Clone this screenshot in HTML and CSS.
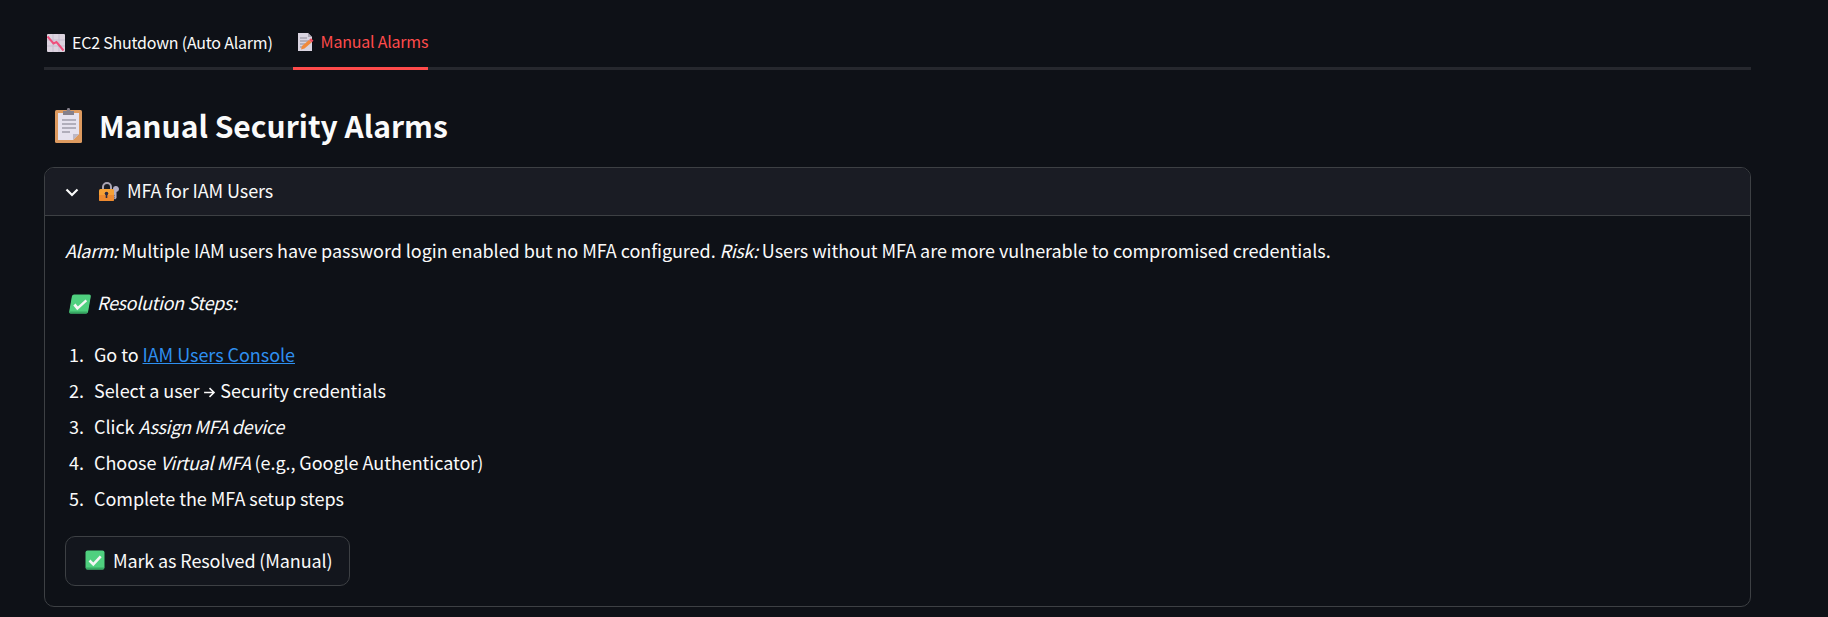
FILE: index.html
```html
<!DOCTYPE html>
<html>
<head>
    <title>Manual Alarms</title>
    <link rel="stylesheet" href="styles.css">
</head>
<body>
    <svg class="defs" width="0" height="0">
        <symbol id="check" viewBox="0 0 20 20">
            <rect x="0.5" y="0.5" width="19" height="19" rx="2" fill="#4fd07f"/>
            <path d="M1 17.500v1a1 1 0 0 0 1 1h16a1 1 0 0 0 1-1v-1z" fill="#36a862"/>
            <path d="M4.500 10.500l3.800 3.800 7.400-8" fill="none" stroke="#f4f6f4" stroke-width="2.600"/>
        </symbol>
    </svg>
    <main class="page">
        <div class="tabs">
            <button class="tab" type="button">
                <svg class="tab-icon" viewBox="0 0 18 18">
                    <rect width="18" height="18" rx="1" fill="#dcd3df"/>
                    <path d="M0 6h18M0 12h18M6 0v18M12 0v18" stroke="#c6bdcf" stroke-width="1"/>
                    <path d="M0.500 2.500l6 7 3-1.500 7 8.500" fill="none" stroke="#ef4f7c" stroke-width="2"/>
                </svg>
                EC2 Shutdown (Auto Alarm)
            </button>
            <button class="tab active" type="button">
                <svg class="tab-icon memo" viewBox="0 0 16 18">
                    <path d="M0 0h10l4 4v14H0z" fill="#d9d4e0"/>
                    <path d="M10 0l4 4h-4z" fill="#a9a4b2"/>
                    <path d="M2 5h7M2 8h9M2 11h5M2 14h3" stroke="#8d8a98" stroke-width="1"/>
                    <path d="M3 16.500l1-3.500 7-6 2.500 2.500-7 6z" fill="#f08a3c"/>
                    <path d="M11 7l2-1.700 2.500 2.500-2 1.700z" fill="#ef4f5f"/>
                </svg>
                Manual Alarms
            </button>
        </div>

        <h1 class="title">
            <svg class="title-icon" viewBox="0 0 27 35">
                <rect y="2" width="27" height="33" rx="1.500" fill="#dd9a5f"/>
                <path d="M3 5h21v21l-6 6H3z" fill="#e6e2ee"/>
                <path d="M24 26l-6 6v-6z" fill="#bdb8c6"/>
                <path d="M7 12h14M7 16h14M7 20h14M7 24h8" stroke="#a09dab" stroke-width="1.300"/>
                <path d="M8 3h3.500l1-3h2l1 3H19v4H8z" fill="#85808c"/>
            </svg>
            Manual Security Alarms
        </h1>

        <section class="expander">
            <div class="expander-head">
                <svg class="chevron" viewBox="0 0 14 14">
                    <path d="M1.500 4.500L7 10l5.500-5.500" fill="none" stroke="#fafafa" stroke-width="2.200"/>
                </svg>
                <svg class="lock-icon" viewBox="0 0 20 20">
                    <path d="M14 8.500a3 3 0 1 1 3.500 2.500v6l-1.500 1.500-1-1 .5-1-.5-1 .5-1-.5-1z" fill="#b3aec4"/>
                    <path d="M4 9V6a4 4 0 0 1 8 0v3" fill="none" stroke="#a9a4b2" stroke-width="2"/>
                    <rect y="8" width="15" height="12" rx="1.500" fill="#f6a136"/>
                    <path d="M0 14h15v4.500a1.500 1.500 0 0 1-1.500 1.500h-12A1.500 1.500 0 0 1 0 18.500z" fill="#ee8a30"/>
                    <circle cx="7.500" cy="12.500" r="1.800" fill="#2b2a44"/>
                    <path d="M6.700 13h1.600v4H6.700z" fill="#2b2a44"/>
                </svg>
                <span>MFA for IAM Users</span>
            </div>
            <div class="expander-body">
                <p class="para"><em>Alarm:</em> Multiple IAM users have password login enabled but no MFA configured. <em>Risk:</em> Users without MFA are more vulnerable to compromised credentials.</p>
                <p class="para"><svg class="check-icon slanted"><use href="#check"/></svg><em>Resolution Steps:</em></p>
                <ol class="steps">
                    <li>Go to <a href="#">IAM Users Console</a></li>
                    <li>Select a user <svg class="arrow" viewBox="0 0 12 12"><path d="M1 6h9.500M6 2l4.200 4L6 10" fill="none" stroke="#fafafa" stroke-width="1.400"/></svg> Security credentials</li>
                    <li>Click <em>Assign MFA device</em></li>
                    <li>Choose <em>Virtual MFA</em> (e.g., Google Authenticator)</li>
                    <li>Complete the MFA setup steps</li>
                </ol>
                <button class="resolve" type="button"><svg class="check-icon"><use href="#check"/></svg>Mark as Resolved (Manual)</button>
            </div>
        </section>
    </main>
</body>
</html>
```

FILE: styles.css
```css
body {
    margin: 0;
    background-color: #0e1117;
    color: #fafafa;
    font-family: "Noto Sans CJK JP", "Noto Sans", sans-serif;
    font-size: 18px;
    line-height: 1.6;
    letter-spacing: -0.05px;
}

em {
    letter-spacing: -0.35px;
}

.defs {
    display: block;
    height: 0;
}

.page {
    width: 1707px;
    margin-left: 44px;
}

.tabs {
    display: flex;
    gap: 20px;
    height: 70px;
    border-bottom: 3px solid #26282e;
    box-sizing: border-box;
}

.tab {
    display: flex;
    align-items: center;
    gap: 7px;
    height: 70px;
    padding: 16px 0 0;
    border: 0;
    background: none;
    color: #fafafa;
    font: inherit;
    font-size: 16px;
    letter-spacing: -0.22px;
}

.tab.active {
    color: #ff4b4b;
    border-bottom: 3px solid #ff4b4b;
}

.tab-icon {
    width: 18px;
    height: 18px;
    margin-left: 3px;
}

.tab-icon.memo {
    width: 16px;
    margin-left: 5px;
}

.title {
    display: flex;
    align-items: center;
    gap: 17px;
    height: 97px;
    box-sizing: border-box;
    margin: 0;
    padding: 13px 0 0 11px;
    font-size: 30px;
    font-weight: 600;
    letter-spacing: 0;
}

.title-icon {
    width: 27px;
    height: 35px;
    margin-top: 1px;
}

.expander {
    height: 440px;
    box-sizing: border-box;
    border: 1px solid #3d4044;
    border-radius: 10px;
    overflow: hidden;
}

.expander-head {
    display: flex;
    align-items: center;
    height: 47px;
    box-sizing: content-box;
    padding-left: 20px;
    background-color: #1a1c24;
    border-bottom: 1px solid #3d4044;
    letter-spacing: -0.1px;
}

.expander-head span {
    padding-bottom: 3px;
}

.chevron {
    width: 14px;
    height: 14px;
    margin-right: 20px;
}

.lock-icon {
    width: 20px;
    height: 20px;
    margin-right: 8px;
    margin-bottom: 2px;
}

.expander-body {
    padding: 20px 20px 0;
}

.para {
    margin: 0 0 23px;
    line-height: 29px;
}

.check-icon {
    width: 20px;
    height: 20px;
    margin-right: 7px;
    vertical-align: -4px;
}

.slanted {
    margin-left: 5px;
    transform: skewX(-10deg);
}

.steps {
    margin: 0 0 16px;
    padding: 0;
    list-style: none;
    counter-reset: step;
}

.steps li {
    height: 36px;
    padding-left: 29px;
    line-height: 29px;
    counter-increment: step;
    position: relative;
}

.steps li::before {
    content: counter(step) ".";
    position: absolute;
    left: 4px;
}

a {
    color: #2e8ff0;
}

.arrow {
    width: 13px;
    height: 13px;
    vertical-align: -1px;
}

.resolve {
    display: flex;
    align-items: center;
    width: 285px;
    height: 50px;
    padding: 0 0 2px 19px;
    border: 1px solid #3d4044;
    border-radius: 10px;
    background-color: #13161d;
    color: #fafafa;
    font: inherit;
    letter-spacing: -0.12px;
}

.resolve .check-icon {
    margin-right: 8px;
}
```
